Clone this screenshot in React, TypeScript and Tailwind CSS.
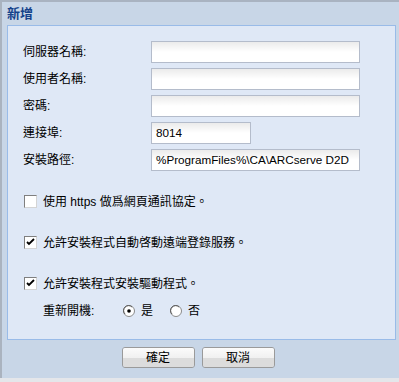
import React from "react";

const font = { fontFamily: '"Liberation Sans", "Noto Sans CJK TC", sans-serif' };

function Field({ label, value, w = 209 }: { label: string; value?: string; w?: number }) {
  return (
    <div className="flex items-center h-[22px]">
      <div className="w-[128px] text-[12px] text-black leading-none">{label}</div>
      <div
        className="h-[22px] border border-[#b4bccb] bg-gradient-to-b from-[#ebebeb] via-white to-white flex items-center pl-[4px] text-[11.7px] text-black whitespace-nowrap overflow-hidden"
        style={{ width: w }}
      >
        {value}
      </div>
    </div>
  );
}

function Check({ checked }: { checked: boolean }) {
  return (
    <div className="w-[13px] h-[13px] border border-t-[#7f7f7f] border-l-[#7f7f7f] border-r-[#d4d4d4] border-b-[#d4d4d4] bg-white shrink-0 flex items-center justify-center">
      {checked && (
        <svg width="9" height="9" viewBox="0 0 9 9">
          <path d="M1 4 L3 6 L8 1" stroke="#000" strokeWidth="1.8" fill="none" />
        </svg>
      )}
    </div>
  );
}

function Radio({ on }: { on: boolean }) {
  return (
    <svg width="12" height="12" viewBox="0 0 12 12" className="shrink-0">
      <circle cx="6" cy="6" r="5.5" fill="#fff" stroke="#8a8a8a" />
      <path d="M2 9 A4.5 4.5 0 0 1 9 2" stroke="#5a5a5a" fill="none" />
      {on && <circle cx="6" cy="6" r="1.8" fill="#000" />}
    </svg>
  );
}

function Btn({ children }: { children: React.ReactNode }) {
  return (
    <div className="w-[73px] h-[21px] rounded-[3px] border border-[#9a9a9a] flex flex-col overflow-hidden relative">
      <div className="h-[10px] bg-gradient-to-b from-[#fbfbfb] to-[#f0f0f0]" />
      <div className="flex-1 bg-[#dcdcdc]" />
      <div className="absolute inset-0 flex items-center justify-center text-[12px] text-black">{children}</div>
    </div>
  );
}

export default function App() {
  return (
    <div className="w-[399px] h-[382px] bg-[#c8d6e7] overflow-hidden flex flex-col" style={font}>
      <div className="h-[2px] bg-[#a9b3c1]" />
      <div className="flex-1 flex flex-col border-l-2 border-[#aab3bf] pr-[3px]">
        <div className="h-[23px] flex items-center pl-[5px] text-[13px] font-bold text-[#15428b]">新增</div>
        <div className="ml-[5px] h-[315px] border border-[#99bbe8] bg-[#dfe8f6] pt-[15px] pl-[15px] flex flex-col">
          <div className="flex flex-col gap-[5px]">
            <Field label="伺服器名稱:" />
            <Field label="使用者名稱:" />
            <Field label="密碼:" />
            <Field label="連接埠:" value="8014" w={100} />
            <Field label="安裝路徑:" value="%ProgramFiles%\CA\ARCserve D2D" />
          </div>
          <div className="flex items-center gap-[6px] mt-[24px] ml-[1px] text-[12px] text-black h-[13px]">
            <Check checked={false} />
            <span>使用 https 做爲網頁通訊協定。</span>
          </div>
          <div className="flex items-center gap-[6px] mt-[28px] ml-[1px] text-[12px] text-black h-[13px]">
            <Check checked={true} />
            <span>允許安裝程式自動啓動遠端登錄服務。</span>
          </div>
          <div className="flex items-center gap-[6px] mt-[28px] ml-[1px] text-[12px] text-black h-[13px]">
            <Check checked={true} />
            <span>允許安裝程式安裝驅動程式。</span>
          </div>
          <div className="flex items-center mt-[14px] ml-[20px] text-[12px] text-black h-[14px]">
            <span className="w-[80px]">重新開機:</span>
            <Radio on={true} />
            <span className="ml-[6px]">是</span>
            <span className="ml-[17px]"><Radio on={false} /></span>
            <span className="ml-[6px]">否</span>
          </div>
        </div>
        <div className="flex justify-center gap-[7px] mt-[7px] -ml-[2px]">
          <Btn>確定</Btn>
          <Btn>取消</Btn>
        </div>
      </div>
      <div className="h-[4px] bg-[#e4e6ea]" />
    </div>
  );
}
